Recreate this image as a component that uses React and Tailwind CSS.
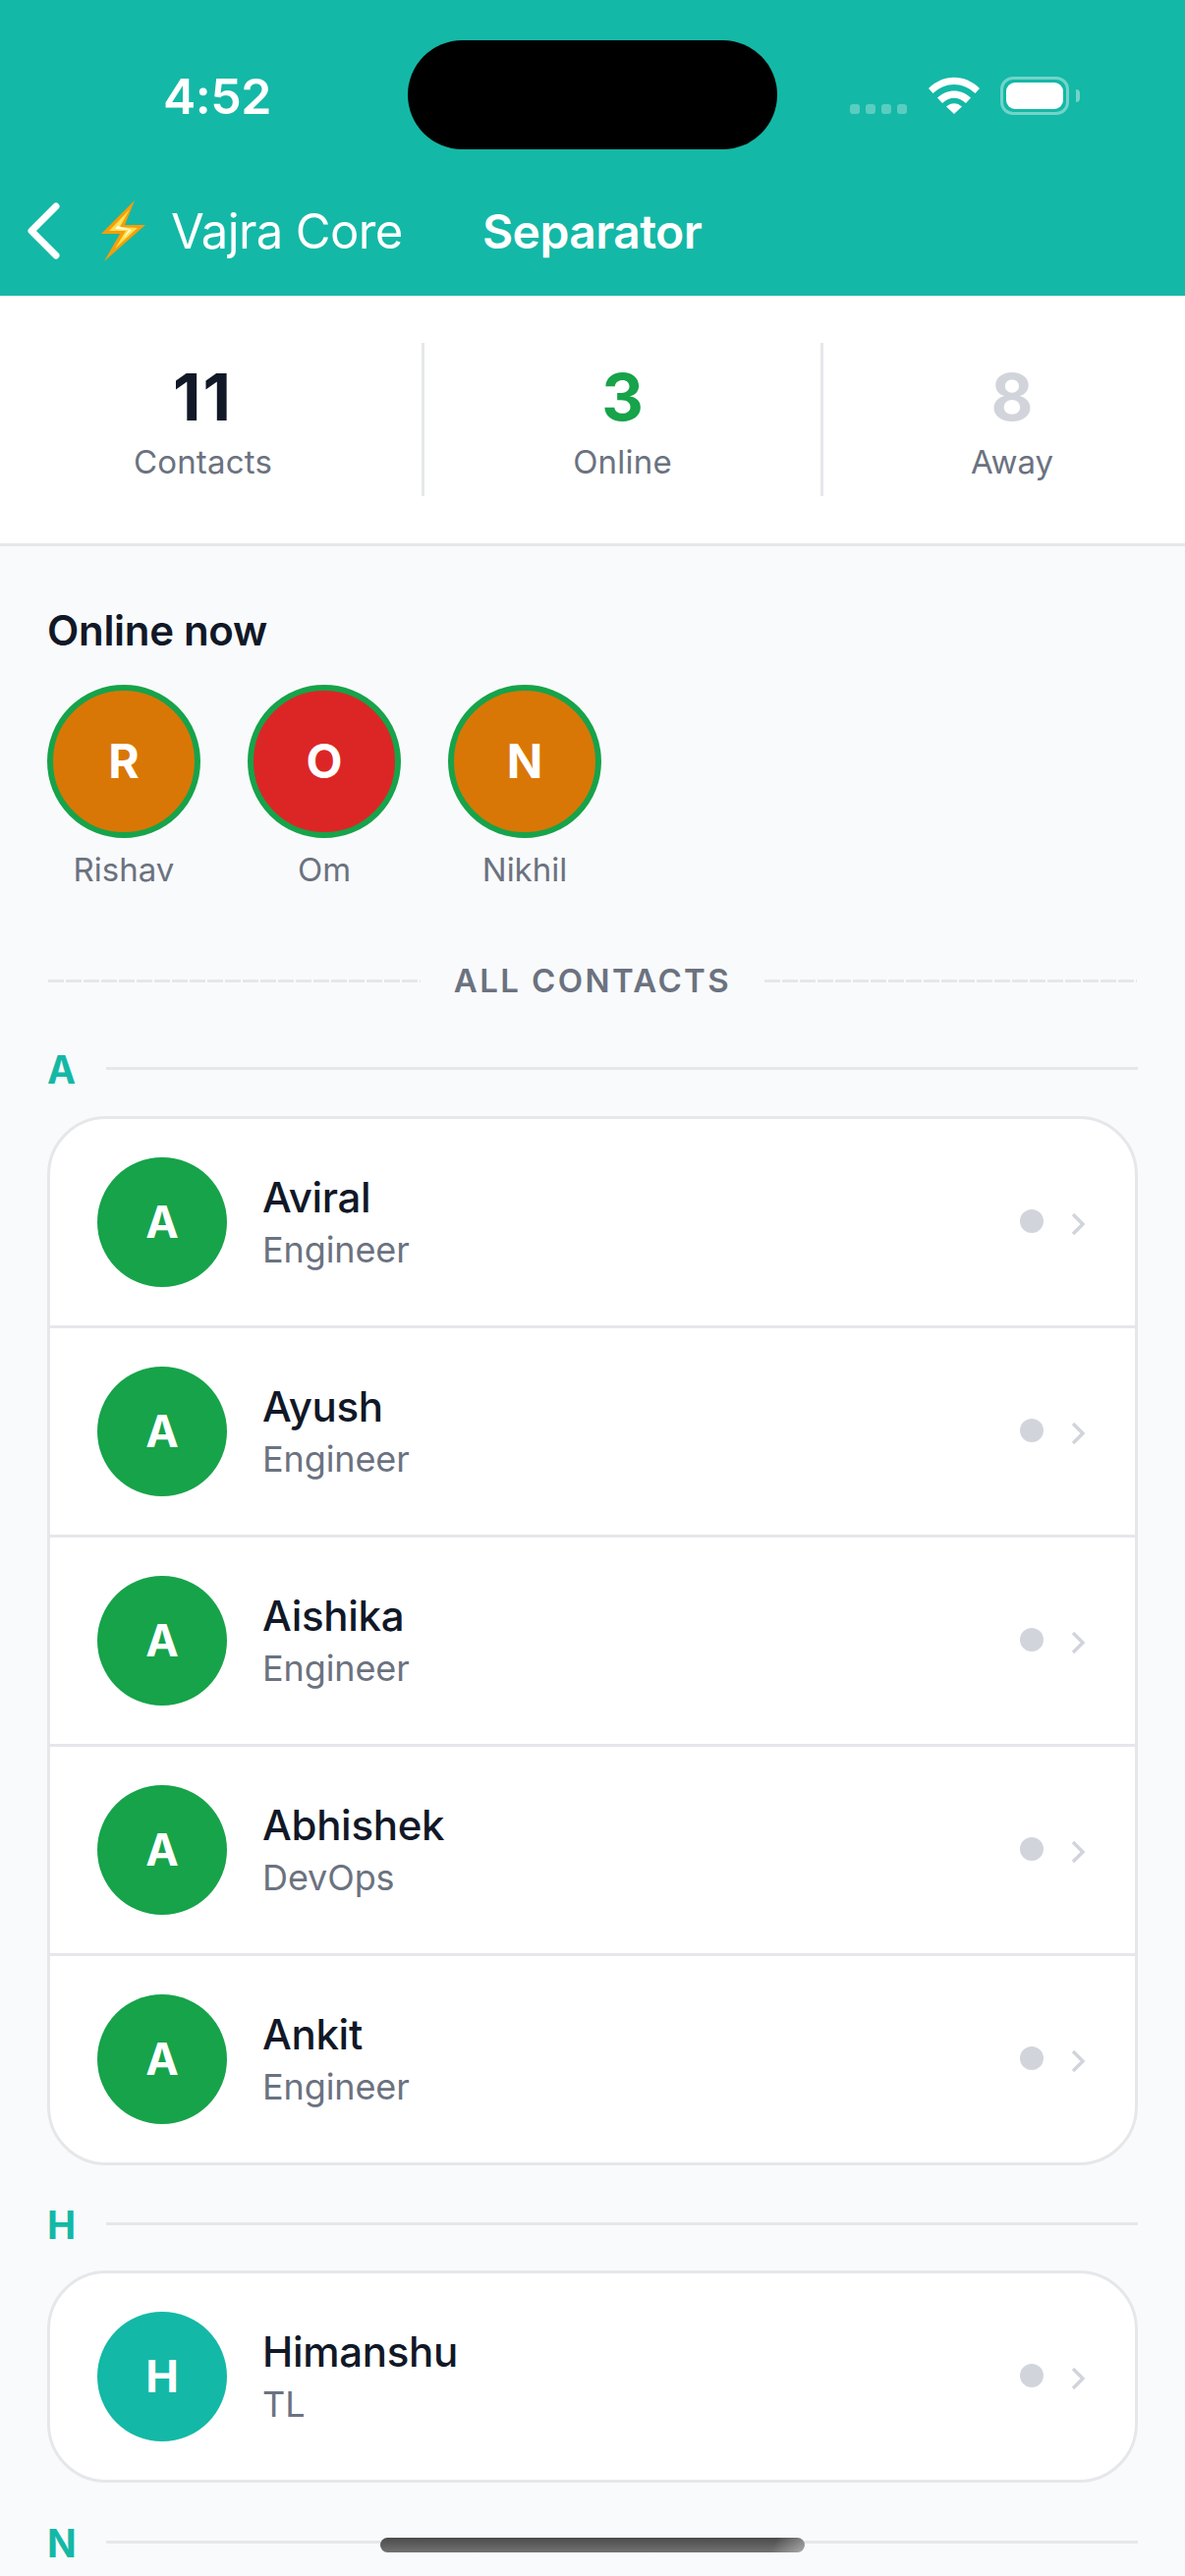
const letterA = [
  { name: "Aviral", role: "Engineer" },
  { name: "Ayush", role: "Engineer" },
  { name: "Aishika", role: "Engineer" },
  { name: "Abhishek", role: "DevOps" },
  { name: "Ankit", role: "Engineer" },
];

const onlineNow = [
  { name: "Rishav", color: "bg-[#d97706]" },
  { name: "Om", color: "bg-[#dc2626]" },
  { name: "Nikhil", color: "bg-[#d97706]" },
];

function StatusBar() {
  return (
    <div className="h-[193px] relative shrink-0">
      <div className="absolute left-[415px] top-[41px] w-[376px] h-[111px] rounded-full bg-black" />
      <div className="absolute left-[166px] top-[68px] text-[50px] leading-[60px] font-semibold text-white font-['Inter',sans-serif] tracking-[-0.5px]">
        4:52
      </div>
      <div className="absolute left-[865px] top-[106px] flex gap-[6px]">
        <div className="w-[10px] h-[10px] rounded-[3px] bg-white/30" />
        <div className="w-[10px] h-[10px] rounded-[3px] bg-white/30" />
        <div className="w-[10px] h-[10px] rounded-[3px] bg-white/30" />
        <div className="w-[10px] h-[10px] rounded-[3px] bg-white/30" />
      </div>
      <svg className="absolute left-[945px] top-[78px]" width="52" height="38" viewBox="0 0 52 38">
        <path d="M0 12 C15 -3 37 -3 52 12 L47.5 17 C34 5 18 5 4.5 17 Z" fill="white" />
        <path d="M9 21.5 C19 12 33 12 43 21.5 L38 27 C30 20 22 20 14 27 Z" fill="white" />
        <path d="M18 30.5 C23 26 29 26 34 30.5 L26 38 Z" fill="white" />
      </svg>
      <div className="absolute left-[1018px] top-[78px] w-[70px] h-[39px] rounded-[13px] border-[3px] border-white/40 p-[3px]">
        <div className="w-full h-full rounded-[9px] bg-white" />
      </div>
      <div className="absolute left-[1095px] top-[91px] w-[4px] h-[13px] rounded-r-full bg-white/40" />
    </div>
  );
}

function Bolt() {
  return (
    <svg width="46" height="62" viewBox="0 0 46 62" className="shrink-0">
      <path d="M34 0 L0 34 L19 34 L3 62 L45 25 L24 25 Z" fill="#f59e0b" />
      <path d="M29 9 L8 31 L25 31 L14 49 L37 28 L19 27 Z" fill="#fde047" />
      <path d="M25 16 L14 29 L28 30 L22 39 L31 30 L17 26 Z" fill="#fffbeb" />
    </svg>
  );
}

function NavBar() {
  return (
    <div className="h-[108px] flex items-start shrink-0 text-white font-['Inter',sans-serif] text-[49px] leading-[60px]">
      <svg width="40" height="62" viewBox="0 0 40 62" className="ml-[25px] mt-[11px] shrink-0">
        <path d="M32 6 L7 31 L32 56" fill="none" stroke="white" strokeWidth="7" strokeLinecap="round" strokeLinejoin="round" />
      </svg>
      <div className="ml-[38px] mt-[11px]">
        <Bolt />
      </div>
      <span className="ml-[25px] mt-[13px] w-[317px] shrink-0 tracking-[-0.6px]">Vajra Core</span>
      <span className="mt-[13px] font-semibold tracking-[-0.6px] text-[48px]">Separator</span>
    </div>
  );
}

function Stats() {
  return (
    <div className="flex h-[255px] py-[48px] bg-white border-b-[3px] border-[#e5e7eb] font-['Inter',sans-serif]">
      <div className="w-[432px] pr-[16px] flex flex-col items-center border-r-[3px] border-[#e5e7eb]">
        <span className="text-[66px] leading-[66px] mt-[22px] font-bold tracking-[2px] text-[#111827]">11</span>
        <span className="text-[33px] leading-[40px] mt-[13px] tracking-[0.2px] text-[#6b7280]">Contacts</span>
      </div>
      <div className="w-[406px] flex flex-col items-center border-r-[3px] border-[#e5e7eb]">
        <span className="text-[66px] leading-[66px] mt-[22px] font-bold text-[#16a34a]">3</span>
        <span className="text-[33px] leading-[40px] mt-[13px] tracking-[0.2px] text-[#6b7280]">Online</span>
      </div>
      <div className="flex-1 pl-[16px] flex flex-col items-center">
        <span className="text-[66px] leading-[66px] mt-[22px] font-bold text-[#d1d5db]">8</span>
        <span className="text-[33px] leading-[40px] mt-[13px] text-[#6b7280]">Away</span>
      </div>
    </div>
  );
}

function OnlineNow() {
  return (
    <div className="px-[48px] pt-[59px]">
      <div className="text-[42px] leading-[54px] font-semibold tracking-[-0.3px] text-[#111827]">Online now</div>
      <div className="flex gap-[48px] mt-[28px]">
        {onlineNow.map((p) => (
          <div key={p.name} className="w-[156px] flex flex-col items-center">
            <div className={`w-[156px] h-[156px] rounded-full border-[6px] border-[#16a34a] flex items-center justify-center text-white font-bold text-[48px] ${p.color}`}>
              {p.name[0]}
            </div>
            <span className="text-[33px] leading-[40px] mt-[12px] text-[#6b7280]">{p.name}</span>
          </div>
        ))}
      </div>
    </div>
  );
}

function AllContacts() {
  const dashes = "h-[3px] flex-1 bg-[repeating-linear-gradient(90deg,#e5e7eb_0_16px,transparent_16px_18px)]";
  return (
    <div className="flex items-center gap-[34px] mx-[49px] mt-[73px]">
      <div className={dashes} />
      <span className="text-[33px] leading-[40px] font-semibold tracking-[2.4px] text-[#6b7280]">ALL CONTACTS</span>
      <div className={dashes} />
    </div>
  );
}

function LetterHeader({ letter, className }) {
  return (
    <div className={`flex items-center gap-[30px] mx-[48px] ${className}`}>
      <span className="text-[39px] leading-[48px] font-bold text-[#14b8a6] w-[30px]">{letter}</span>
      <div className="h-[3px] flex-1 bg-[#e5e7eb] -mt-[4px]" />
    </div>
  );
}

function ContactRow({ contact, color, last }) {
  return (
    <div className={`flex items-center h-[210px] px-[48px] box-content ${last ? "" : "border-b-[3px] border-[#e5e7eb]"}`}>
      <div className={`w-[132px] h-[132px] rounded-full flex items-center justify-center text-white font-bold text-[45px] shrink-0 ${color}`}>
        {contact.name[0]}
      </div>
      <div className="ml-[36px] flex-1 min-w-0 -mt-[2px]">
        <div className="text-[42px] leading-[54px] font-medium tracking-[-0.3px] text-[#111827]">{contact.name}</div>
        <div className="text-[36px] leading-[46px] mt-[3px] tracking-[-0.1px] text-[#6b7280]">{contact.role}</div>
      </div>
      <div className="w-[24px] h-[24px] rounded-full bg-[#d1d5db] -mt-[2px]" />
      <svg width="14" height="22" viewBox="0 0 14 22" className="ml-[28px] mt-[4px] mr-[3px] shrink-0">
        <path d="M2 1 L12 11 L2 21" fill="none" stroke="#d1d5db" strokeWidth="3.5" />
      </svg>
    </div>
  );
}

function ContactCard({ contacts, color, className }) {
  return (
    <div className={`mx-[48px] bg-white border-[3px] border-[#e5e7eb] rounded-[60px] overflow-hidden ${className}`}>
      {contacts.map((c, i) => (
        <ContactRow key={c.name} contact={c} color={color} last={i === contacts.length - 1} />
      ))}
    </div>
  );
}

export default function App() {
  return (
    <div className="relative w-[1206px] h-[2622px] overflow-hidden bg-[#f9fafb] font-['Inter',sans-serif]">
      <div className="bg-[#14b8a6] h-[301px] flex flex-col">
        <StatusBar />
        <NavBar />
      </div>
      <Stats />
      <OnlineNow />
      <AllContacts />
      <LetterHeader letter="A" className="mt-[47px]" />
      <ContactCard contacts={letterA} color="bg-[#16a34a]" className="mt-[23px]" />
      <LetterHeader letter="H" className="mt-[37px]" />
      <ContactCard contacts={[{ name: "Himanshu", role: "TL" }]} color="bg-[#14b8a6]" className="mt-[22px]" />
      <LetterHeader letter="N" className="mt-[38px]" />
      <div className="absolute left-[387px] top-[2583px] w-[432px] h-[15px] rounded-[8px] bg-[linear-gradient(115deg,transparent_92%,rgba(255,255,255,0.4)),linear-gradient(180deg,#4b4b4b,#727272)]" />
    </div>
  );
}
